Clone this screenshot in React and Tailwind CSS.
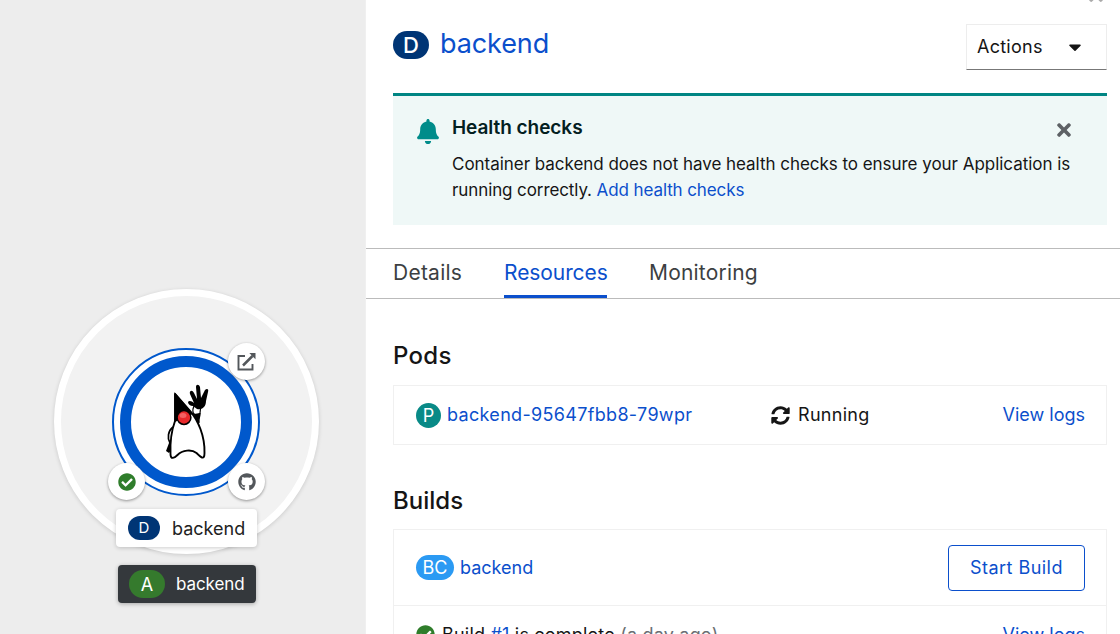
import React from "react";
import { FaBell, FaTimes, FaCaretDown, FaSyncAlt, FaCheckCircle, FaGithub } from "react-icons/fa";

const link = "text-[#0b4fcc]";
const decorator = "absolute flex h-[37px] w-[37px] items-center justify-center rounded-full bg-white shadow-[0_1px_3px_rgba(0,0,0,0.4)]";

function ExternalLinkIcon() {
  return (
    <svg width="20" height="20" viewBox="0 0 20 20" fill="none" stroke="#53575b">
      <path d="M8 4H1.500v13.500h14V12" strokeWidth="1.9" />
      <path d="M6 13.500 15.500 4" strokeWidth="2.500" />
      <path d="M12.300 1h6.200v6.200z" fill="#53575b" stroke="none" />
    </svg>
  );
}

function Duke() {
  return (
    <svg width="46" height="78" viewBox="0 0 46 78">
      <path d="M8 43C3 47 2 54 5 59" fill="none" stroke="#000" strokeWidth="1.7" />
      <path d="M4 59l3-1v7l-3 4-3-2z" />
      <path d="M28 25c-1 6 4 8 7 4l1-9-6-1z" fill="#fff" stroke="#000" strokeWidth="1.2" />
      <path d="M35 29c0 4-2 6-1 10l-5-9" stroke="#000" strokeWidth="1.500" />
      <path d="M10 10v27C6 48 5 58 5.500 70c0 6 4 4 7 1 5-5 14-6 19-2 4 4 8 8 8 0C40 52 33 36 25 27z" fill="#fff" stroke="#000" strokeWidth="1.900" strokeLinejoin="round" />
      <path d="M9.500 8 28 30l-6 2-12 6z" />
      <path d="M28 22c-3 0-5-2-5-4 1-2 4-1 6 1l-4-9c-1-3 2-5 4-1l3 6-1-12c0-3 3-3 4 0l1 11 4-8c2-2 4-1 3 2l-2 9c0 6-4 9-9 8z" />
      <circle cx="19" cy="33.500" r="6.900" fill="#e8292b" stroke="#000" strokeWidth="1.500" />
      <ellipse cx="18" cy="31.500" rx="3.500" ry="2.500" fill="#f8797a" opacity=".7" />
    </svg>
  );
}

function Topology() {
  return (
    <div className="relative h-full w-[365px] shrink-0 bg-[#ededed]">
      <div className="absolute left-[54px] top-[289px] h-[265px] w-[265px] rounded-full border-[7.500px] border-white bg-[#f2f2f2] shadow-[0_1px_4px_rgba(0,0,0,0.15)]" />
      <div className="absolute left-[112px] top-[347.500px] h-[148px] w-[148px] rounded-full border-2 border-[#0058cc] bg-white p-[6px]">
        <div className="h-full w-full rounded-full border-[11px] border-[#0058cc]" />
      </div>
      <div className="absolute left-[165px] top-[384px]"><Duke /></div>
      <div className={"left-[228px] top-[343px] " + decorator}><ExternalLinkIcon /></div>
      <div className={"left-[108px] top-[463px] " + decorator}><FaCheckCircle className="size-[18px] text-[#2f7d2b]" /></div>
      <div className={"left-[228px] top-[463px] " + decorator}><FaGithub className="size-[18px] text-[#53575b]" /></div>
      <div className="absolute left-[116px] top-[509px] flex h-[38px] w-[141px] items-center rounded-[4px] bg-white pl-[12px] shadow-[0_1px_4px_rgba(0,0,0,0.2)]">
        <span className="flex h-6 w-8 items-center justify-center rounded-full bg-[#003575] text-[15px] text-white">D</span>
        <span className="ml-[12px] text-[18px] text-[#222]">backend</span>
      </div>
      <div className="absolute left-[118px] top-[565px] flex h-[38px] w-[138px] items-center rounded-[4px] bg-[#34383c] pl-[11px] shadow-[0_1px_4px_rgba(0,0,0,0.3)]">
        <span className="flex h-7 w-9 items-center justify-center rounded-full bg-[#357a2d] text-[18px] text-white">A</span>
        <span className="ml-[11px] mt-px text-[17px] tracking-[-0.1px] text-white">backend</span>
      </div>
    </div>
  );
}

export default function App() {
  return (
    <div className="flex h-[634px] w-[1120px] overflow-hidden bg-white font-['Inter',sans-serif] text-[18px] text-[#151515]">
      <Topology />
      <main className="relative min-w-0 flex-1 border-l border-[#f0f0f0]">
        <FaTimes className="absolute right-[14px] -top-[15px] size-[20px] text-[#aaa]" />
        <header className="flex h-[93px] items-start pl-[27px] pr-[13px]">
          <span className="mt-[31px] flex h-7 w-9 items-center justify-center rounded-full bg-[#003575] text-[22px] font-medium text-white">D</span>
          <h1 className={"ml-[11px] mt-[25px] text-[27px] leading-[38px] tracking-[-0.1px] " + link}>backend</h1>
          <button className="ml-auto mt-[24px] flex h-[46px] w-[141px] items-center border border-[#ededed] border-b-[#777] pb-[2px] pl-[10px]">
            <span className="w-[88px] text-left tracking-[0.25px]">Actions</span>
            <FaCaretDown className="mt-[2px] size-[20px]" />
          </button>
        </header>
        <section className="ml-[27px] mr-[13px] flex h-[132px] border-t-[3px] border-[#008583] bg-[#eff8f7] pl-[24px]">
          <FaBell className="mt-[23px] h-[25px] w-[22px] text-[#008c8a]" />
          <div className="ml-[13px] mt-[19px] w-[602px]">
            <h2 className="text-[19px] font-semibold leading-[26px] tracking-[-0.05px] text-[#03201f]">Health checks</h2>
            <p className="mt-[10px] whitespace-nowrap text-[17px] leading-[26px] tracking-[-0.035px]">Container backend does not have health checks to ensure your Application is<br /><span className="tracking-[-0.1px]">running correctly. <a className={link}>Add health checks</a></span></p>
          </div>
          <FaTimes className="mt-[24px] size-[20px] text-[#5d6165]" />
        </section>
        <nav className="mt-[23px] flex h-[51px] gap-[42px] border-y border-[#bbb] pl-[27px] text-[21px] leading-[47px] text-[#3c3f42]">
          <span className="w-[69px] whitespace-nowrap tracking-[0.250px]">Details</span>
          <span className={"h-[49px] w-[103px] whitespace-nowrap border-b-[3px] border-[#0b4fcc] tracking-[-0.080px] " + link}>Resources</span>
          <span className="whitespace-nowrap tracking-[0.200px]">Monitoring</span>
        </nav>
        <div className="pl-[27px] pr-[13px]">
          <h2 className="mt-[41px] text-[24px] leading-[32px] font-medium tracking-[0.300px]">Pods</h2>
          <div className="mt-[13px] flex h-[60px] items-center border border-[#f0f0f0] pl-[22px] pr-[21px]">
            <span className="flex size-[25px] items-center justify-center rounded-full bg-[#098a87] text-white">P</span>
            <a className={"-mt-[2px] ml-[6px] w-[324px] tracking-[0.320px] " + link}>backend-95647fbb8-79wpr</a>
            <FaSyncAlt className="size-[19px]" />
            <span className="-mt-[2px] ml-[8px] tracking-[0.300px]">Running</span>
            <a className={"-mt-[2px] ml-auto " + link}>View logs</a>
          </div>
          <h2 className="mt-[40px] text-[24px] leading-[32px] font-medium">Builds</h2>
          <div className="mt-[12px] border border-[#f0f0f0]">
            <div className="flex h-[76px] items-center border-b border-[#f0f0f0] pl-[22px] pr-[21px]">
              <span className="flex h-[25px] w-[38px] items-center justify-center rounded-full bg-[#2b9af3] text-white">BC</span>
              <a className={"ml-[6px] " + link}>backend</a>
              <button className={"ml-auto h-[46px] w-[137px] rounded-[4px] border border-[#0b4fcc] tracking-[0.450px] " + link}>Start Build</button>
            </div>
            <div className="flex h-[57px] items-center pl-[22px] pr-[21px]">
              <FaCheckCircle className="size-[19px] text-[#2f7d2b]" />
              <span className="ml-[7px] tracking-[0.200px]">Build <a className={link}>#1</a> is complete <span className="text-[#6a6e73]">(a day ago)</span></span>
              <a className={"ml-auto " + link}>View logs</a>
            </div>
          </div>
        </div>
      </main>
    </div>
  );
}
